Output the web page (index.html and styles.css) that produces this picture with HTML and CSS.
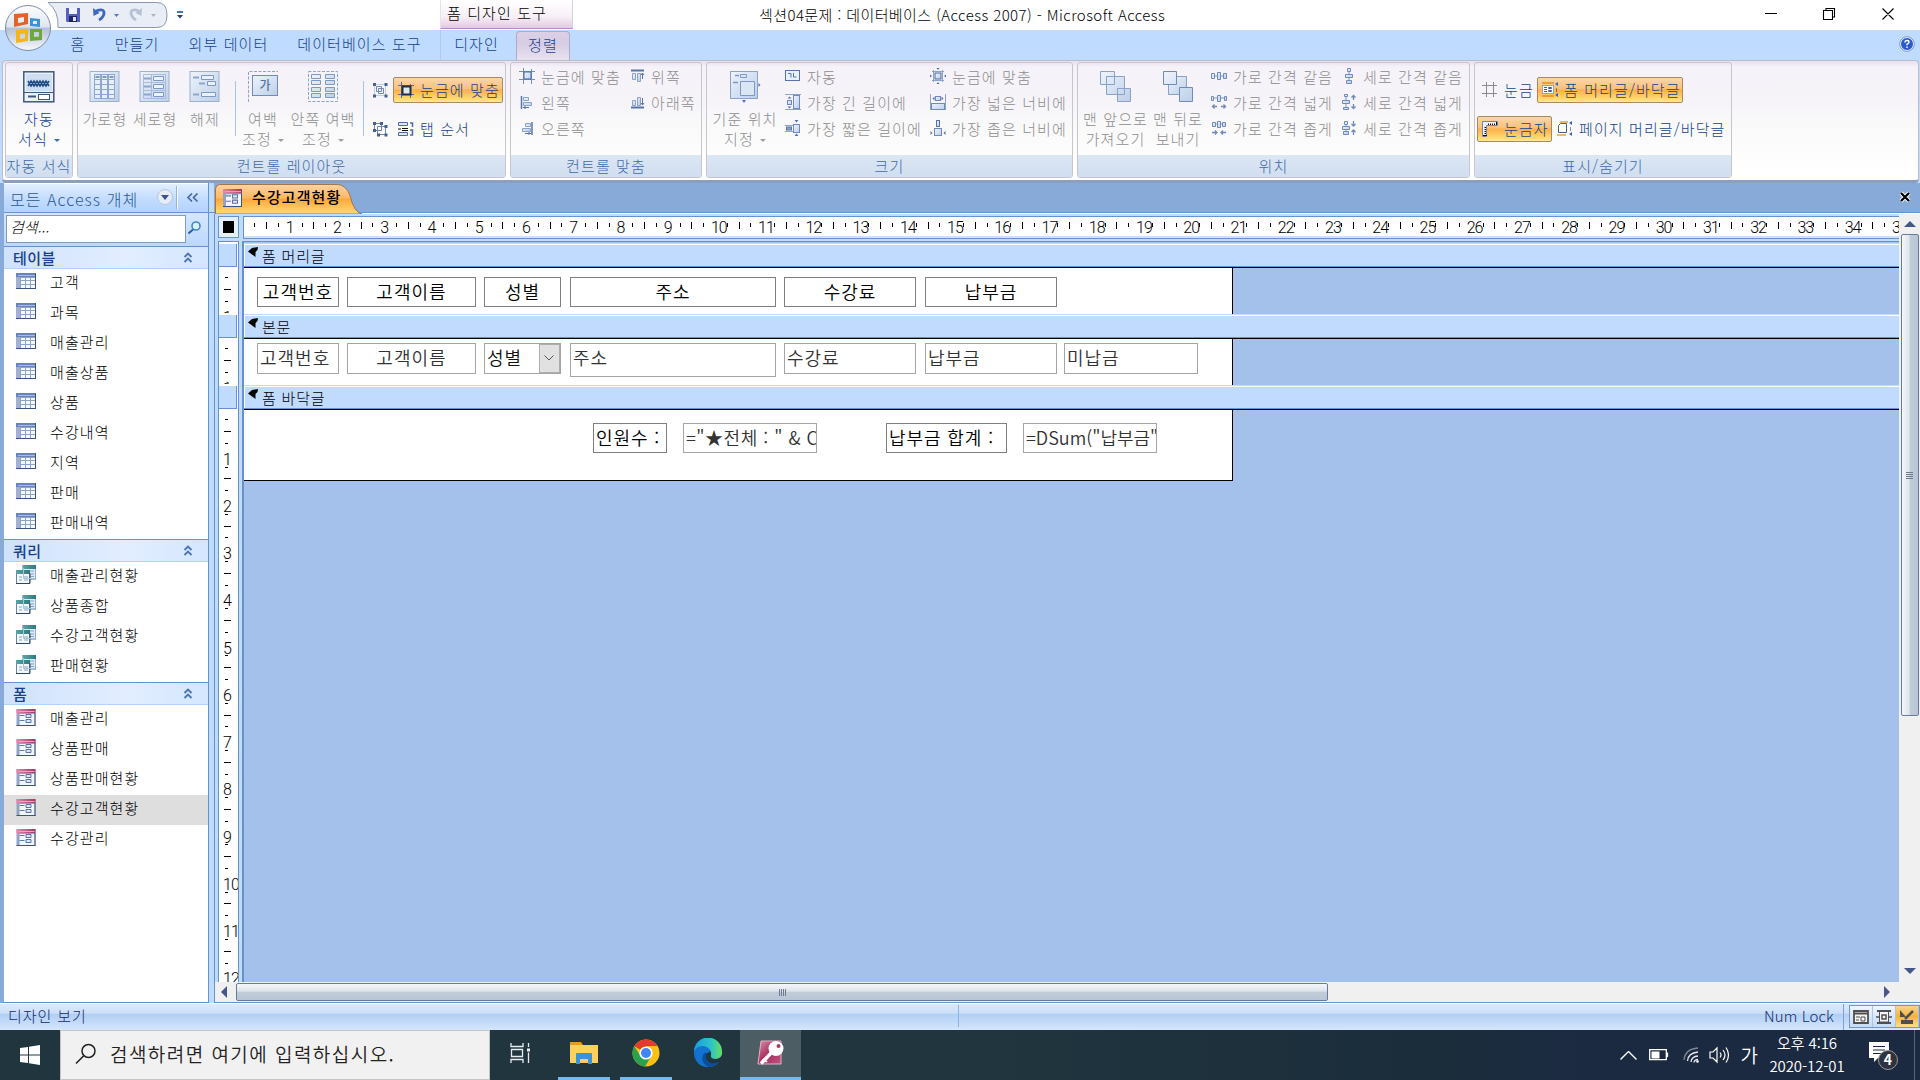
FILE: index.html
```html
<!DOCTYPE html>
<html lang="ko">
<head>
    <meta charset="UTF-8">
    <title>섹션04문제 : 데이터베이스 (Access 2007) - Microsoft Access</title>
    <link rel="stylesheet" href="styles.css">
</head>
<body>

<svg class="defs" width="0" height="0">
    <defs>
        <linearGradient id="gBlue" x1="0" y1="0" x2="1" y2="1"><stop offset="0" stop-color="#eef4fc"/><stop offset="1" stop-color="#bccfe8"/></linearGradient>
        <linearGradient id="gOrb" x1="0" y1="0" x2="0" y2="1"><stop offset="0" stop-color="#fdfdfe"/><stop offset=".48" stop-color="#dfe5ef"/><stop offset=".5" stop-color="#b3c0d6"/><stop offset="1" stop-color="#f6f9fd"/></linearGradient>
        <linearGradient id="gPink" x1="0" y1="0" x2="1" y2="0"><stop offset="0" stop-color="#dc8aab"/><stop offset="1" stop-color="#a8325f"/></linearGradient>
        <linearGradient id="gTeal" x1="0" y1="0" x2="1" y2="0"><stop offset="0" stop-color="#5ba3a5"/><stop offset="1" stop-color="#2f7a80"/></linearGradient>
        <linearGradient id="gTab" x1="0" y1="0" x2="0" y2="1"><stop offset="0" stop-color="#fdd2a2"/><stop offset=".45" stop-color="#fdb964"/><stop offset=".5" stop-color="#fca73c"/><stop offset="1" stop-color="#ffde72"/></linearGradient>
        <linearGradient id="gEdge" x1="0" y1="0" x2="1" y2="0"><stop offset="0" stop-color="#1b9de2"/><stop offset=".6" stop-color="#2cc3c9"/><stop offset="1" stop-color="#66df5a"/></linearGradient>
        <linearGradient id="gAcc" x1="0" y1="0" x2="1" y2="1"><stop offset="0" stop-color="#d892ac"/><stop offset=".5" stop-color="#a82d5f"/><stop offset="1" stop-color="#c0537f"/></linearGradient>
    </defs>
    <symbol id="i-table" viewBox="0 0 20 16">
        <rect width="20" height="16" fill="#8fa3c8"/><path d="M0 0h20v4H0z" fill="#6a84bb"/><path d="M0 4h4v12H0z" fill="#a3b1cd"/>
        <path d="M5 5h4v2H5zM10 5h4v2h-4zM15 5h4v2h-4zM5 8h4v3H5zM10 8h4v3h-4zM15 8h4v3h-4zM5 12h4v3H5zM10 12h4v3h-4zM15 12h4v3h-4z" fill="#f4f8ff"/>
        <path d="M2 2.500h17" stroke="#a7bbe2"/><path d="M0 15.500h20M19.500 0v16" stroke="#3c5480"/>
    </symbol>
    <symbol id="i-query" viewBox="0 0 20 19">
        <rect x="7" width="13" height="14" fill="#dce9f8" stroke="#4f739c"/><path d="M7 0h13v4H7z" fill="url(#gTeal)"/><path d="M14 6h4M14 9h4M14 11.500h4" stroke="#86a4c8"/>
        <rect x=".5" y="5.500" width="13" height="13" fill="#f3f8fe" stroke="#6a84a5"/><path d="M0 5h14v4H0z" fill="url(#gTeal)"/>
        <path d="M3 12h3M3 15h3M8 12h4M8 15h4" stroke="#86a4c8"/><path d="M0 18.500h14v-10" fill="none" stroke="#2f4767"/><path d="M7.500 3v10.500h12" fill="none" stroke="#a9c6d4"/>
    </symbol>
    <symbol id="i-form" viewBox="0 0 19 17">
        <rect width="19" height="17" fill="#93a3c2"/><rect x="3" y="5" width="15" height="11" fill="#f1f6ff"/><path d="M0 0h19v4H0z" fill="url(#gPink)"/><path d="M2 2.500h16" stroke="#e6a9c1"/>
        <path d="M3 6.500h5M3 11.500h5" stroke="#62799f" /><path d="M9.500 5.500h5v3h-5zM9.500 10.500h5v3h-5z" fill="#dce6f7" stroke="#5d7399"/><path d="M0 16.500h19M18.500 4v13" stroke="#3c5480"/>
    </symbol>
    <symbol id="i-chev2" viewBox="0 0 10 11"><path d="M1.500 5L5 1.500 8.500 5M1.500 10L5 6.500 8.500 10" fill="none" stroke="#4a74b4" stroke-width="1.800"/></symbol>
    <symbol id="i-snap" viewBox="0 0 16 16"><path d="M4.500 0v16M12.500 1v15M0 3.500h16M0 11.500h16" stroke="#6f8fc4"/><rect x="5" y="4" width="7" height="7" fill="url(#gBlue)" stroke="#4b68a0"/></symbol>
    <symbol id="i-snapdark" viewBox="0 0 16 16"><path d="M3.500 0v16M12.500 2v14M0 3.500h16M0 12.500h16" stroke="#4a6db0"/><rect x="4.500" y="4.500" width="8" height="8" fill="#dfe8f7" stroke="#222c44" stroke-width="2"/></symbol>
    <symbol id="i-left" viewBox="0 0 16 16"><path d="M2.500 2v13" stroke="#5873a8" stroke-width="1.500"/><path d="M4.500 3.500h5v3h-5zM4.500 8.500h8v3h-8z" fill="url(#gBlue)" stroke="#8ba3cb"/><path d="M4 13.500h6M6 12v3" stroke="#5873a8"/></symbol>
    <symbol id="i-right" viewBox="0 0 16 16"><path d="M13 2v13" stroke="#5873a8" stroke-width="1.500"/><path d="M6.500 3.500h5v3h-5zM3.500 8.500h8v3h-8z" fill="url(#gBlue)" stroke="#8ba3cb"/><path d="M6 13.500h6M10 12v3" stroke="#5873a8"/></symbol>
    <symbol id="i-top" viewBox="0 0 16 16"><path d="M2 2.500h13" stroke="#5873a8" stroke-width="2"/><path d="M3.500 5.500h3v6h-3zM8.500 5.500h3v8h-3z" fill="url(#gBlue)" stroke="#8ba3cb"/><path d="M13.500 5v6M12 7l1.500-2L15 7" stroke="#5873a8" fill="none"/></symbol>
    <symbol id="i-bottom" viewBox="0 0 16 16"><path d="M2 13.500h13" stroke="#5873a8" stroke-width="2"/><path d="M3.500 6.500h3v5h-3zM8.500 3.500h3v8h-3z" fill="url(#gBlue)" stroke="#8ba3cb"/><path d="M13.500 4v7M12 9l1.500 2L15 9" stroke="#5873a8" fill="none"/></symbol>
    <symbol id="i-auto" viewBox="0 0 16 16"><rect x=".5" y="2.500" width="14" height="10" fill="#e9f0fb" stroke="#5873a8"/><path d="M3 5.500h3v4M8.500 5v4h3" stroke="#5873a8" fill="none"/></symbol>
    <symbol id="i-tall" viewBox="0 0 16 16"><path d="M0 .5h16M0 15.500h16" stroke="#8ba3cb"/><rect x="8.500" y="1.500" width="6" height="13" fill="url(#gBlue)" stroke="#6f8abb"/><rect x="2.500" y="6.500" width="4" height="4" fill="url(#gBlue)" stroke="#6f8abb"/><path d="M2.500 4.500l2-2 2 2zM2.500 12.500l2 2 2-2z" fill="#5873a8"/></symbol>
    <symbol id="i-short" viewBox="0 0 16 16"><path d="M0 5.500h8M0 11.500h8" stroke="#8ba3cb"/><rect x="1.500" y="7" width="5" height="3" fill="#8ba3cb" stroke="#5873a8"/><rect x="8.500" y="4.500" width="6" height="8" fill="url(#gBlue)" stroke="#6f8abb"/><path d="M9.500 0h4l-2 2.500zM9.500 16h4l-2-2.500z" fill="#5873a8"/></symbol>
    <symbol id="i-fit" viewBox="0 0 16 16"><path d="M3.500 2v12M12.500 2v12M2 3.500h12M2 12.500h12" stroke="#8ba3cb"/><rect x="5" y="5" width="6" height="6" fill="url(#gBlue)" stroke="#4b68a0"/><path d="M6.500 0h3L8 2zM6.500 16h3L8 14zM0 6.500v3L2 8zM16 6.500v3L14 8z" fill="#5873a8"/></symbol>
    <symbol id="i-wide" viewBox="0 0 16 16"><path d="M.5 0v16M15.500 0v16" stroke="#8ba3cb"/><rect x="1.500" y="9.500" width="13" height="6" fill="url(#gBlue)" stroke="#6f8abb"/><rect x="5.500" y="2.500" width="5" height="4" fill="url(#gBlue)" stroke="#6f8abb"/><path d="M4.500 2.500v4l-2-2zM11.500 2.500v4l2-2z" fill="#5873a8"/></symbol>
    <symbol id="i-narrow" viewBox="0 0 16 16"><rect x="6.500" y=".5" width="3" height="6" fill="url(#gBlue)" stroke="#5873a8"/><rect x="4.500" y="8.500" width="7" height="7" fill="url(#gBlue)" stroke="#6f8abb"/><path d="M.5 11v4l2-2zM15.500 11v4l-2-2z" fill="#5873a8"/></symbol>
    <symbol id="i-heq" viewBox="0 0 16 16"><path d="M0 8h16" stroke="#7f99c6"/><path d="M.5 5.500h3v5h-3zM6.500 4.500h3v7h-3zM12.500 5.500h3v5h-3z" fill="url(#gBlue)" stroke="#6f8abb"/></symbol>
    <symbol id="i-hinc" viewBox="0 0 16 16"><path d="M0 4h16" stroke="#7f99c6"/><path d="M.5 2.500h2v4h-2zM6.500 1.500h3v6h-3zM13.500 2.500h2v4h-2z" fill="url(#gBlue)" stroke="#6f8abb"/><path d="M1 12.500h5M10 12.500h5M3.500 10.500l-2 2 2 2M12.500 10.500l2 2-2 2" fill="none" stroke="#6f8abb" stroke-width="1.300"/></symbol>
    <symbol id="i-hdec" viewBox="0 0 16 16"><path d="M2 4h12" stroke="#7f99c6"/><path d="M1.500 2.500h3v4h-3zM6.500 1.500h3v6h-3zM11.500 2.500h3v4h-3z" fill="url(#gBlue)" stroke="#6f8abb"/><path d="M1 12.500h5M10 12.500h5M4 10.500l2 2-2 2M12 10.500l-2 2 2 2" fill="none" stroke="#6f8abb" stroke-width="1.300"/></symbol>
    <symbol id="i-veq" viewBox="0 0 16 16"><path d="M8 0v16" stroke="#7f99c6"/><path d="M6.500 .5h3v3h-3zM4.500 6.500h7v3h-7zM5.500 12.500h5v3h-5z" fill="url(#gBlue)" stroke="#6f8abb"/></symbol>
    <symbol id="i-vinc" viewBox="0 0 16 16"><path d="M5 0v16" stroke="#7f99c6"/><path d="M3.500 .5h3v2h-3zM1.500 6.500h7v3h-7zM2.500 13.500h5v2h-5z" fill="url(#gBlue)" stroke="#6f8abb"/><path d="M12.500 1v5M12.500 10v5M10.500 3.500l2-2 2 2M10.500 12.500l2 2 2-2" fill="none" stroke="#6f8abb" stroke-width="1.300"/></symbol>
    <symbol id="i-vdec" viewBox="0 0 16 16"><path d="M5 2v12" stroke="#7f99c6"/><path d="M3.500 1.500h3v3h-3zM1.500 6.500h7v3h-7zM2.500 11.500h5v3h-5z" fill="url(#gBlue)" stroke="#6f8abb"/><path d="M12.500 1v5M12.500 10v5M10.500 4l2 2 2-2M10.500 12l2-2 2 2" fill="none" stroke="#6f8abb" stroke-width="1.300"/></symbol>
    <symbol id="i-group" viewBox="0 0 16 16"><path d="M2.500 2.500h11v11h-11z" fill="none" stroke="#c3cde0"/><path d="M4.500 4.500h5v5h-5zM6.500 6.500h5v5h-5z" fill="none" stroke="#6f87b3"/><path d="M1 1h3v3H1zM12.500 1h3v3h-3zM1 12.500h3v3H1zM12.500 12.500h3v3h-3z" fill="#47618f"/></symbol>
    <symbol id="i-ungroup" viewBox="0 0 16 16"><path d="M2.500 2.500h7v7h-7zM5.500 5.500h8v8h-8z" fill="none" stroke="#6f87b3"/><path d="M1 1h3v3H1zM8 1h3v3H8zM1 8h3v3H1zM12.500 4h3v3h-3zM12.500 12.500h3v3h-3zM5 12.500h3v3H5z" fill="#47618f"/></symbol>
    <symbol id="i-taborder" viewBox="0 0 16 16"><path d="M.5 1.500h9v3h-9zM.5 11.500h9v3h-9z" fill="#dce6f5" stroke="#50699c"/><path d="M0 8h3M4 7.500h6M4 9.500h6" stroke="#111"/><path d="M12 2h2.500v4M12 9h2.500v5H12" fill="none" stroke="#50699c" stroke-width="1.500"/></symbol>
    <symbol id="i-grid" viewBox="0 0 16 16"><path d="M4.500 0v15M11.500 0v15M0 3.500h15M0 11.500h15" stroke="#8b8b8b"/></symbol>
    <symbol id="i-ruler" viewBox="0 0 16 16"><path d="M.5 .5h15v4h-11v11h-4z" fill="#eef4ff" stroke="#6c86b6"/><path d="M6.500 4V2.500M8.500 4V2.500M10.500 4V2.500M12.500 4V2.500M14.500 4V1M4 6.500H2.500M4 8.500H2.500M4 10.500H2.500M4 12.500H2.500M5 14.500H1" stroke="#111"/></symbol>
    <symbol id="i-formhf" viewBox="0 0 16 16"><path d="M0 1h12M0 14h12" stroke="#f08a24" stroke-width="1.500"/><rect x=".5" y="3.500" width="11" height="8" fill="#fff" stroke="#8fa5cc"/><path d="M2 5.500h3M2 7.500h3M2 9.500h3M6.500 5.500h3v1h-3zM6.500 8.500h3v1h-3z" fill="none" stroke="#445f95"/><path d="M16 0v4L13 2zM16 11v4L13 13z" fill="#3565b5"/><path d="M14 7h1M14 9h1" stroke="#222"/></symbol>
    <symbol id="i-pagehf" viewBox="0 0 16 16"><path d="M3 1h8M0 14h9" stroke="#f0a13c" stroke-width="1.500"/><path d="M3.500 2.500h6v9h-8v-7z" fill="#fff" stroke="#445f95"/><path d="M15 0v4L12 2zM15 11v4L12 13z" fill="#3565b5"/><path d="M13 7h1M13 9h1" stroke="#222"/></symbol>
    <symbol id="i-flag" viewBox="0 0 10 10"><path d="M10 0L9.500 3 7.500 5v5L0 4.500 4 1z" fill="#000"/></symbol>
</svg>

<div class="window">

    <!-- Title bar -->
    <header class="titlebar">
        <div class="qat">
            <svg width="150" height="30" viewBox="0 0 150 30">
                <path d="M0 2.500h109q10 0 10 12.500t-10 12.500H10Q11 11 0 2.500z" fill="#e9eef6" stroke="#8d99ab"/>
                <path d="M18 8h14v14H19l-1-1z" fill="#5560c4"/><path d="M21 8h8v6h-8z" fill="#eef1fb"/><path d="M21 16h8v6h-8z" fill="#20275e"/><path d="M25 17h3v4h-3z" fill="#dfe4f5"/>
                <path d="M48 11q8-3 8 2 0 4-5 7" fill="none" stroke="#3d68bd" stroke-width="2.800"/><path d="M45 8l.5 8 6-3z" fill="#3d68bd"/>
                <path d="M66 14h5l-2.500 3z" fill="#4f7bc0"/><path d="M103 14h5l-2.500 3z" fill="#b0b3b8"/>
                <path d="M91 11q-8-3-8 2 0 4 5 7" fill="none" stroke="#b5c2d6" stroke-width="2.800"/><path d="M94 8l-.5 8-6-3z" fill="#b5c2d6"/>
                <path d="M129 12h6" stroke="#15428b" stroke-width="1.500"/><path d="M129 15h6l-3 3.500z" fill="#15428b"/>
            </svg>
        </div>
        <div class="context-title">폼 디자인 도구</div>
        <div class="window-title">섹션04문제 : 데이터베이스 (Access 2007) - Microsoft Access</div>
        <svg class="window-buttons" width="140" height="30" viewBox="0 0 140 30">
            <path d="M5 13.500h12M63.500 10.500h9v9h-9zM66 10V8.500h8.500V17H73M122.500 8.500l11 11M133.500 8.500l-11 11" fill="none" stroke="#000" stroke-width="1.100"/>
        </svg>
    </header>
    <svg class="orb" width="48" height="56" viewBox="0 0 48 56">
        <ellipse cx="24" cy="28" rx="22.500" ry="22.500" fill="url(#gOrb)" stroke="#7d8ca6"/>
        <path d="M10 14l14-1v11l-14 3zm4 4v5l6-1v-5z" fill="#e2642b" fill-rule="evenodd"/>
        <path d="M26 18l10 1v8l-10-1zm3 3v3h4v-3z" fill="#3b93d6" fill-rule="evenodd"/>
        <path d="M12 30l12-1v12l-12 2zm4 4v5l5-1v-5z" fill="#f2b51c" fill-rule="evenodd"/>
        <path d="M26 29h12v11l-12 1zm4 3v5l5-.5V32z" fill="#6da83a" fill-rule="evenodd"/>
    </svg>

    <!-- Ribbon tabs -->
    <nav class="tabs">
        <span class="tab t-home">홈</span><span class="tab t-create">만들기</span><span class="tab t-ext">외부 데이터</span><span class="tab t-db">데이터베이스 도구</span><span class="tab t-design">디자인</span><span class="tab active">정렬</span>
        <svg class="help" width="16" height="16" viewBox="0 0 16 16"><circle cx="8" cy="8" r="6.500" fill="#2a5bd0" stroke="#fff"/><circle cx="8" cy="8" r="7.300" fill="none" stroke="#5b7fc0" stroke-width=".7"/><path d="M6 6.500q0-2 2-2t2 1.700q0 1-2 2v1M8 10.500v1.500" fill="none" stroke="#fff" stroke-width="1.400"/></svg>
    </nav>

    <!-- Ribbon -->
    <div class="ribbon">
        <section class="group g1">
            <div class="group-body">
                <div class="big on">
                    <svg width="32" height="32" viewBox="0 0 32 32"><rect x=".8" y=".8" width="30" height="30" fill="#eaf1fa" stroke="#3f5780" stroke-width="1.500"/><rect x="3" y="3" width="26" height="17" fill="#cfdff2"/><path d="M5 10l3 5 3-5 3 5 3-5 3 5 3-5 3 5M5 15l3-5 3 5 3-5 3 5 3-5 3 5 3-5" fill="none" stroke="#1f4a86" stroke-width="1.500"/><path d="M1 21.500h30" stroke="#3f5780"/><path d="M5 25.500h8" stroke="#3f5780" stroke-width="2"/><rect x="15.500" y="23.500" width="11" height="5" fill="#fff" stroke="#3f5780"/></svg>
                    <span>자동<br>서식<i class="dd"></i></span>
                </div>
            </div>
            <div class="group-title">자동 서식</div>
        </section>
        <section class="group g2">
            <div class="group-body">
                <div class="big w50">
                    <svg width="32" height="32" viewBox="0 0 32 32"><rect x="1" y=".5" width="29" height="30" fill="url(#gBlue)" stroke="#9bb0d2"/><path d="M5.500 3.500h20v24h-20zM11.500 3v25M12.500 3v25M18.500 3v25M19.500 3v25M5 8.500h21M5 13.500h21M5 18.500h21M5 23.500h21" fill="#e6eefa" stroke="#8fa6cd"/><path d="M6.500 6h4M13.500 6h4M20.500 6h4" stroke="#7f98c2" stroke-width="2"/></svg>
                    <span>가로형</span>
                </div>
                <div class="big w50">
                    <svg width="32" height="32" viewBox="0 0 32 32"><rect x="1" y=".5" width="29" height="30" fill="url(#gBlue)" stroke="#9bb0d2"/><path d="M4.500 3.500h22v24h-22zM4 11.500h23M4 19.500h23M12.500 3v25" fill="none" stroke="#a9bcda"/><path d="M14.500 5.500h10v4h-10zM14.500 13.500h10v4h-10zM14.500 21.500h10v4h-10z" fill="#e9f1fc" stroke="#7f98c2"/><path d="M5 7.500h7M5 15.500h7M5 23.500h7" stroke="#8fa6cd" stroke-width="2"/></svg>
                    <span>세로형</span>
                </div>
                <div class="big w50">
                    <svg width="32" height="32" viewBox="0 0 32 32"><rect x="1" y=".5" width="29" height="30" fill="url(#gBlue)" stroke="#9bb0d2"/><path d="M12.500 4.500h12v4h-12zM18.500 10.500h8v4h-8zM12.500 21.500h14v4h-14z" fill="#e9f1fc" stroke="#7f98c2"/><path d="M4 6.500h6M10 12.500h6M4 23.500h6" stroke="#8fa6cd" stroke-width="2"/></svg>
                    <span>해제</span>
                </div>
                <div class="sep"></div>
                <div class="big w54">
                    <svg width="32" height="32" viewBox="0 0 32 32"><path d="M1.500 31V.5H31" fill="none" stroke="#8fa3c6" stroke-dasharray="3 1.500"/><rect x="5.500" y="4.500" width="25" height="20" fill="url(#gBlue)" stroke="#6f8abb"/><text x="18" y="19" class="ga">가</text></svg>
                    <span>여백<br>조정<i class="dd"></i></span>
                </div>
                <div class="big w66">
                    <svg width="32" height="32" viewBox="0 0 32 32"><rect x="1.500" y=".5" width="29" height="30" fill="none" stroke="#8fa3c6" stroke-dasharray="3 1.500"/><path d="M4.500 3.500h9v4h-9zM18.500 3.500h9v4h-9zM4.500 9.500h9v4h-9zM18.500 9.500h9v4h-9zM4.500 16.500h9v4h-9zM18.500 16.500h9v4h-9zM4.500 22.500h9v4h-9zM18.500 22.500h9v4h-9z" fill="url(#gBlue)" stroke="#7f98c2"/></svg>
                    <span>안쪽 여백<br>조정<i class="dd"></i></span>
                </div>
                <div class="sep s2"></div>
                <div class="pair-rows">
                    <div class="pair"><svg class="ic"><use href="#i-group"/></svg><div class="btn lit w110"><svg class="ic"><use href="#i-snapdark"/></svg>눈금에 맞춤</div></div>
                    <div class="pair"><svg class="ic"><use href="#i-ungroup"/></svg><div class="btn w110"><svg class="ic"><use href="#i-taborder"/></svg>탭 순서</div></div>
                </div>
            </div>
            <div class="group-title">컨트롤 레이아웃</div>
        </section>
        <section class="group g3">
            <div class="group-body">
                <div class="rows w118">
                    <div class="small"><svg class="ic"><use href="#i-snap"/></svg>눈금에 맞춤</div>
                    <div class="small"><svg class="ic"><use href="#i-left"/></svg>왼쪽</div>
                    <div class="small"><svg class="ic"><use href="#i-right"/></svg>오른쪽</div>
                </div>
                <div class="rows">
                    <div class="small"><svg class="ic"><use href="#i-top"/></svg>위쪽</div>
                    <div class="small"><svg class="ic"><use href="#i-bottom"/></svg>아래쪽</div>
                </div>
            </div>
            <div class="group-title">컨트롤 맞춤</div>
        </section>
        <section class="group g4">
            <div class="group-body">
                <div class="big w76">
                    <svg width="32" height="32" viewBox="0 0 32 32"><rect x="1.500" y=".5" width="27" height="27" fill="url(#gBlue)" stroke="#8ba3cb"/><path d="M11.500 3.500h6v3h-6zM11.500 10.500h14v14h-14z" fill="#dbe6f5" stroke="#7f98c2"/><path d="M6 4.500h4M4 11.500h5" stroke="#7f98c2" stroke-width="1.500"/><path d="M29.500 12v4l2-2zM13 29h4l-2 3z" fill="#5873a8"/></svg>
                    <span>기준 위치<br>지정<i class="dd"></i></span>
                </div>
                <div class="rows w145">
                    <div class="small"><svg class="ic"><use href="#i-auto"/></svg>자동</div>
                    <div class="small"><svg class="ic"><use href="#i-tall"/></svg>가장 긴 길이에</div>
                    <div class="small"><svg class="ic"><use href="#i-short"/></svg>가장 짧은 길이에</div>
                </div>
                <div class="rows">
                    <div class="small"><svg class="ic"><use href="#i-fit"/></svg>눈금에 맞춤</div>
                    <div class="small"><svg class="ic"><use href="#i-wide"/></svg>가장 넓은 너비에</div>
                    <div class="small"><svg class="ic"><use href="#i-narrow"/></svg>가장 좁은 너비에</div>
                </div>
            </div>
            <div class="group-title">크기</div>
        </section>
        <section class="group g5">
            <div class="group-body">
                <div class="big w75">
                    <svg width="32" height="32" viewBox="0 0 32 32"><g fill="url(#gBlue)" stroke="#8aa2ca"><path d="M.5 .5h14v13H.5zM17.500 17.500h13v13h-13zM6.500 5.500h18v18h-18z"/></g></svg>
                    <span>맨 앞으로<br>가져오기</span>
                </div>
                <div class="big w50">
                    <svg width="32" height="32" viewBox="0 0 32 32"><g fill="url(#gBlue)" stroke="#8aa2ca"><path d="M6.500 5.500h18v18h-18z"/><path d="M1.500 .5h13v13h-13zM17.500 16.500h13v14h-13z" stroke="#6f8abb"/></g></svg>
                    <span>맨 뒤로<br>보내기</span>
                </div>
                <div class="rows w138">
                    <div class="small"><svg class="ic"><use href="#i-heq"/></svg>가로 간격 같음</div>
                    <div class="small"><svg class="ic"><use href="#i-hinc"/></svg>가로 간격 넓게</div>
                    <div class="small"><svg class="ic"><use href="#i-hdec"/></svg>가로 간격 좁게</div>
                </div>
                <div class="rows">
                    <div class="small"><svg class="ic"><use href="#i-veq"/></svg>세로 간격 같음</div>
                    <div class="small"><svg class="ic"><use href="#i-vinc"/></svg>세로 간격 넓게</div>
                    <div class="small"><svg class="ic"><use href="#i-vdec"/></svg>세로 간격 좁게</div>
                </div>
            </div>
            <div class="group-title">위치</div>
        </section>
        <section class="group g6">
            <div class="group-body">
                <div class="pair-rows">
                    <div class="pair"><div class="btn w60"><svg class="ic"><use href="#i-grid"/></svg>눈금</div><div class="btn lit w146"><svg class="ic"><use href="#i-formhf"/></svg>폼 머리글/바닥글</div></div>
                    <div class="pair"><div class="btn lit w75"><svg class="ic"><use href="#i-ruler"/></svg>눈금자</div><div class="btn"><svg class="ic"><use href="#i-pagehf"/></svg>페이지 머리글/바닥글</div></div>
                </div>
            </div>
            <div class="group-title">표시/숨기기</div>
        </section>
    </div>

    <main class="main">
        <!-- Navigation pane -->
        <aside class="nav">
            <div class="nav-head"><span>모든 Access 개체</span>
                <svg width="46" height="26" viewBox="0 0 46 26"><circle cx="9" cy="13" r="7.500" fill="#e4edf9" stroke="#b7c6de"/><path d="M5 11h8l-4 5z" fill="#3a4f94"/><path d="M20.500 2v23" stroke="#8fb3e5"/><path d="M21.500 2v23" stroke="#fff"/><path d="M36 9.500l-4 4 4 4M41.500 9.500l-4 4 4 4" fill="none" stroke="#41659f" stroke-width="1.600"/></svg>
            </div>
            <div class="nav-search"><div class="search-box">검색...</div>
                <svg width="14" height="14" viewBox="0 0 14 14"><circle cx="8" cy="5" r="4" fill="#dff1ff" stroke="#3e8ac6" stroke-width="1.600"/><path d="M5 8.500l-4.500 4" stroke="#2d5fa5" stroke-width="2"/></svg>
            </div>
            <div class="nav-section">테이블<svg width="10" height="11"><use href="#i-chev2"/></svg></div>
            <ul>
                <li><svg width="20" height="16"><use href="#i-table"/></svg>고객</li>
                <li><svg width="20" height="16"><use href="#i-table"/></svg>과목</li>
                <li><svg width="20" height="16"><use href="#i-table"/></svg>매출관리</li>
                <li><svg width="20" height="16"><use href="#i-table"/></svg>매출상품</li>
                <li><svg width="20" height="16"><use href="#i-table"/></svg>상품</li>
                <li><svg width="20" height="16"><use href="#i-table"/></svg>수강내역</li>
                <li><svg width="20" height="16"><use href="#i-table"/></svg>지역</li>
                <li><svg width="20" height="16"><use href="#i-table"/></svg>판매</li>
                <li><svg width="20" height="16"><use href="#i-table"/></svg>판매내역</li>
            </ul>
            <div class="nav-section">쿼리<svg width="10" height="11"><use href="#i-chev2"/></svg></div>
            <ul>
                <li><svg width="20" height="19"><use href="#i-query"/></svg>매출관리현황</li>
                <li><svg width="20" height="19"><use href="#i-query"/></svg>상품종합</li>
                <li><svg width="20" height="19"><use href="#i-query"/></svg>수강고객현황</li>
                <li><svg width="20" height="19"><use href="#i-query"/></svg>판매현황</li>
            </ul>
            <div class="nav-section">폼<svg width="10" height="11"><use href="#i-chev2"/></svg></div>
            <ul>
                <li><svg width="19" height="17"><use href="#i-form"/></svg>매출관리</li>
                <li><svg width="19" height="17"><use href="#i-form"/></svg>상품판매</li>
                <li><svg width="19" height="17"><use href="#i-form"/></svg>상품판매현황</li>
                <li class="selected"><svg width="19" height="17"><use href="#i-form"/></svg>수강고객현황</li>
                <li><svg width="19" height="17"><use href="#i-form"/></svg>수강관리</li>
            </ul>
        </aside>

        <!-- Form designer -->
        <div class="doc">
            <div class="doc-tabs">
                <div class="doc-tab">
                    <svg class="doc-tab-bg" width="150" height="30" viewBox="0 0 150 30"><path d="M.5 30V5q0-4 4-4.500H122q9 0 13 11 4 17 12 18.500z" fill="url(#gTab)" stroke="#a0764a"/></svg>
                    <svg class="doc-icon" width="19" height="18" viewBox="0 0 19 17" preserveAspectRatio="none"><use href="#i-form"/></svg>
                    <b>수강고객현황</b>
                </div>
                <svg class="doc-close" width="12" height="12" viewBox="0 0 12 12"><path d="M2 2l8 8M10 2l-8 8" stroke="#fff" stroke-width="4"/><path d="M2 2l8 8M10 2l-8 8" stroke="#000" stroke-width="2.300"/></svg>
            </div>
            <div class="doc-body">
                <div class="design">
                    <div class="ruler-row">
                        <div class="selector"><i></i></div>
                        <div class="hruler" id="hruler"></div>
                    </div>
                    <div class="canvas">
                        <div class="vruler">
                            <div class="vband"></div><div class="vpart" data-len="46"></div>
                            <div class="vband"></div><div class="vpart" data-len="46"></div>
                            <div class="vband"></div><div class="vpart grow" data-len="573"></div>
                        </div>
                        <div class="sections">
                            <div class="band"><svg width="10" height="10"><use href="#i-flag"/></svg>폼 머리글</div>
                            <div class="sheet head">
                                <div class="field c w82">고객번호</div><div class="field c w129">고객이름</div><div class="field c w77">성별</div><div class="field c w206">주소</div><div class="field c w132">수강료</div><div class="field c w132b">납부금</div>
                            </div>
                            <div class="band"><svg width="10" height="10"><use href="#i-flag"/></svg>본문</div>
                            <div class="sheet detail">
                                <div class="field w82">고객번호</div><div class="field c w129">고객이름</div><div class="field combo w77">성별<em><svg width="10" height="6" viewBox="0 0 10 6"><path d="M.5 .5L5 5 9.500 .5" fill="none" stroke="#555"/></svg></em></div><div class="field tall w206">주소</div><div class="field w132">수강료</div><div class="field w132b">납부금</div><div class="field w134">미납금</div>
                            </div>
                            <div class="band"><svg width="10" height="10"><use href="#i-flag"/></svg>폼 바닥글</div>
                            <div class="sheet foot">
                                <div class="field lbl f1">인원수 :</div><div class="field f2">="★전체 : " &amp; Count(*)</div><div class="field lbl f3">납부금 합계 :</div><div class="field f4">=DSum("납부금","수강")</div>
                            </div>
                        </div>
                    </div>
                    <div class="hscroll">
                        <svg width="12" height="14" viewBox="0 0 12 14"><path d="M9 1v12L3 7z" fill="#44578a"/></svg>
                        <div class="hthumb"><i></i><i></i><i></i><i></i></div>
                        <svg width="12" height="14" viewBox="0 0 12 14"><path d="M2 1v12l6-6z" fill="#44578a"/></svg>
                    </div>
                </div>
                <div class="vscroll">
                    <svg width="12" height="8" viewBox="0 0 12 8"><path d="M0 7h12L6 1z" fill="#44578a"/></svg>
                    <div class="vthumb"><i></i><i></i><i></i><i></i></div>
                    <svg class="down" width="12" height="8" viewBox="0 0 12 8"><path d="M0 1h12L6 7z" fill="#44578a"/></svg>
                </div>
            </div>
        </div>
    </main>

    <footer class="status">
        <span class="mode">디자인 보기</span>
        <i class="status-div"></i>
        <span class="numlock">Num Lock</span>
        <div class="views">
            <span><svg width="16" height="14" viewBox="0 0 16 14"><path d="M1 1h14v12H1z" fill="#f4f4f4" stroke="#4f4f4f" stroke-width="1.800"/><path d="M1 3.500h14" stroke="#4f4f4f" stroke-width="2"/><path d="M3 7h4M3 10h3M8 7h4v4H8z" stroke="#4f4f4f" fill="none"/></svg></span>
            <span><svg width="16" height="14" viewBox="0 0 16 14"><path d="M1 1h14M1 13h14" stroke="#4f4f4f" stroke-width="1.800"/><path d="M3.500 2v10h9V2" fill="#f4f4f4" stroke="#4f4f4f"/><path d="M0 7h4M12 7h4M6 5h4v4H6z" stroke="#4f4f4f" stroke-width="1.500" fill="none"/></svg></span>
            <span class="cur"><svg width="16" height="14" viewBox="0 0 16 14"><path d="M1 0v7h6z" fill="#4f4f4f"/><path d="M14 1L6 9" stroke="#4f4f4f" stroke-width="2.500"/><path d="M2 10h12v4H2z" fill="#4f4f4f"/></svg></span>
        </div>
    </footer>

    <!-- Windows taskbar -->
    <div class="taskbar">
        <div class="start"><svg width="20" height="20" viewBox="0 0 20 20"><path d="M0 3l8-1v7.500H0zM9 1.800L20 0v9.500H9zM0 10.500h8V18l-8-1zM9 10.500h11V20L9 18.300z" fill="#fff"/></svg></div>
        <div class="task-search"><svg width="22" height="22" viewBox="0 0 22 22"><circle cx="13.500" cy="8" r="6.500" fill="none" stroke="#222" stroke-width="1.500"/><path d="M9 12.500L1 20.500" stroke="#222" stroke-width="1.600"/></svg>검색하려면 여기에 입력하십시오.</div>
        <div class="app taskview"><svg width="22" height="20" viewBox="0 0 22 20"><path d="M1 0v3.500h12V0M1.500 6.500h11v7h-11zM1 20v-3.500h12V20M18.500 0v4M18.500 9.500V20" fill="none" stroke="#e8ecee" stroke-width="1.300"/><path d="M17 5.500h3v3h-3z" fill="#e8ecee"/></svg></div>
        <div class="app run"><svg width="28" height="24" viewBox="0 0 28 24"><path d="M0 1h11l2 3H0z" fill="#e2a01a"/><path d="M0 4h28v18H0z" fill="#fbd15b"/><path d="M6 13q0-1 1-1h14q1 0 1 1v10h-4v-5h-8v5H6z" fill="#3a93d8"/></svg></div>
        <div class="app run"><svg width="28" height="28" viewBox="0 0 28 28"><circle cx="14" cy="14" r="13.500" fill="#fbc116"/><path d="M14 14L2.300 7.200A13.500 13.500 0 0 1 25.700 7.200z" fill="#e33b2e"/><path d="M14 7h11.600L20 17.500z" fill="#fbc116"/><path d="M2.300 7.200A13.500 13.500 0 0 0 13 27.500L19.500 17 8.500 17z" fill="#2aa14c"/><circle cx="14" cy="14" r="6.600" fill="#fff"/><circle cx="14" cy="14" r="5" fill="#4286f5"/></svg></div>
        <div class="app"><svg width="30" height="30" viewBox="0 0 30 30"><path d="M1 14A14 14 0 0 1 29 13q1 7-6 8-6 0-5-4 1-6-6-7-7 0-11 4z" fill="url(#gEdge)"/><path d="M1 14q2-6 9-6 7 1 7 6-6 1-4 7 4 8 13 3-5 6-13 5A14 14 0 0 1 1 14z" fill="#1173cf"/><path d="M11 15q-5 8 4 14 6 0 11-5-9 4-13-3-1-3 1-6z" fill="#0c4e9e"/></svg></div>
        <div class="app run current"><svg width="28" height="26" viewBox="0 0 28 26"><path d="M4 1h20v23H1z" fill="url(#gAcc)" stroke="#e3b0c4"/><path d="M15 12L4 23.500" stroke="#fff" stroke-width="3.500"/><path d="M6 19l4 3" stroke="#fff" stroke-width="2"/><circle cx="19" cy="8.500" r="7.500" fill="#fff"/><circle cx="21.500" cy="6" r="2" fill="#a33a65"/></svg></div>
        <div class="tray">
            <svg width="17" height="9" viewBox="0 0 17 9"><path d="M.5 8.500l8-8 8 8" fill="none" stroke="#fff" stroke-width="1.400"/></svg>
            <svg class="bat" width="20" height="12" viewBox="0 0 20 12"><path d="M.7 .7h16.600v10H.7zM18.500 3.500v4.500" fill="none" stroke="#fff" stroke-width="1.300"/><path d="M2.500 2.500h8v7h-8z" fill="#fff"/></svg>
            <svg class="wifi" width="18" height="16" viewBox="0 0 18 16"><path d="M1 13Q2 2 15 1" fill="none" stroke="#7d8a9a" stroke-width="1.300"/><path d="M4.500 14Q5 6 15 5M8 15q.5-5.500 7-6M11 15.500q.5-3 4-3" fill="none" stroke="#e6e9ee" stroke-width="1.300"/><circle cx="14.500" cy="14.500" r="1.300" fill="#fff"/></svg>
            <svg class="vol" width="22" height="18" viewBox="0 0 22 18"><path d="M1 6h3l4-4v14l-4-4H1zM11 6.500q2 2.500 0 5M14 4q4 5 0 10M17 1.500q5 7.500 0 15" fill="none" stroke="#fff" stroke-width="1.200"/></svg>
            <span class="ime">가</span>
            <div class="clock">오후 4:16<br>2020-12-01</div>
            <div class="notify"><svg width="20" height="20" viewBox="0 0 20 20"><path d="M0 0h20v16H9l-4 4v-4H0z" fill="#fff"/><path d="M4 4.500h12M4 8h12M4 11.500h8" stroke="#1b2a41"/></svg><span class="badge">4</span></div>
            <i class="peek"></i>
        </div>
    </div>
</div>

<script>
    const STEP = 47.24;

    function addMark(parent, cls, prop, pos, text) {
        const el = document.createElement('i');
        el.className = cls;
        el.style[prop] = pos.toFixed(1) + 'px';
        if (text) el.textContent = text;
        parent.appendChild(el);
    }

    // quarter ticks between the centimetre numbers
    function drawRuler(parent, prop, start, length) {
        for (let k = 1; start + k * STEP / 4 < length; k++) {
            const pos = start + k * STEP / 4;
            if (k % 4 === 0) addMark(parent, 'num', prop, prop === 'top' ? pos - 5 : pos - 4, String(k / 4));
            else addMark(parent, k % 2 ? 'tick' : 'tick mid', prop, pos, '');
        }
    }

    drawRuler(document.getElementById('hruler'), 'left', -1.5, 1656);
    document.querySelectorAll('.vpart').forEach(p => drawRuler(p, 'top', -1.5, Number(p.dataset.len)));
</script>

</body>
</html>
```
FILE: styles.css
```css
* {
    box-sizing: border-box;
}
body {
    margin: 0;
    overflow: hidden;
    font-family: "Noto Sans CJK KR", "Noto Sans", sans-serif;
    font-size: 15px;
    font-weight: 300;
    letter-spacing: 1.1px;
    color: #000;
}
svg {
    display: block;
    flex: none;
}
ul {
    margin: 0;
    padding: 0;
    list-style: none;
}
.defs {
    position: absolute;
}
.window {
    position: relative;
    width: 1920px;
    height: 1080px;
    display: flex;
    flex-direction: column;
    background: #bfdbff;
    white-space: nowrap;
}

/* title bar */
.titlebar {
    height: 30px;
    display: flex;
    background: #fff;
}
.qat {
    width: 392px;
    margin-left: 48px;
}
.context-title {
    width: 133px;
    height: 29px;
    padding-left: 6px;
    line-height: 26px;
    background: linear-gradient(#fff, #f7eff6 60%, #e3c8e2);
    border-bottom: 1px solid #b78acb;
    border-left: 1px solid #e8e0ec;
    border-right: 1px solid #d8cfe0;
}
.window-title {
    width: 1000px;
    padding-left: 186px;
    line-height: 30px;
    letter-spacing: 0.42px;
}
.window-buttons {
    margin-left: 187px;
}
.orb {
    position: absolute;
    left: 4px;
    top: 0;
}

/* ribbon tabs */
.tabs {
    height: 30px;
    display: flex;
    color: #15428b;
    line-height: 28px;
}
.tab {
    text-align: center;
}
.t-home {
    margin-left: 57px;
    width: 42px;
}
.t-create {
    width: 76px;
}
.t-ext {
    width: 107px;
}
.t-db {
    width: 158px;
    padding-right: 3px;
}
.t-design {
    width: 76px;
    padding-right: 4px;
    border-left: 1px solid #b3c9ea;
}
.tab.active {
    width: 54px;
    height: 30px;
    margin-top: 1px;
    background: linear-gradient(#dcd0e6, #d6cce4 40%, #ebe4f1);
    border: 1px solid #b5a7c9;
    border-bottom: 0;
    border-radius: 4px 4px 0 0;
    line-height: 25px;
}
.help {
    margin: 6px 0 0 1329px;
}

/* ribbon */
.ribbon {
    height: 123px;
    padding: 1px 0 0 2px;
    display: flex;
    gap: 4px;
    margin: 0 1px 0 2px;
    background: linear-gradient(#e9def0, #f5f2f9 6px, #f6f4f9 40px, #fafafa 70px, #fff 110px);
    border: 1px solid #b9bdc9;
    border-bottom: 3px solid #8c9fbf;
    border-radius: 4px;
}
.group {
    height: 116px;
    display: flex;
    flex-direction: column;
    border: 1px solid #c6c6cc;
    border-radius: 3px;
    overflow: hidden;
    flex: none;
}
.g1 { width: 68px; }
.g2 { width: 429px; }
.g3 { width: 192px; }
.g4 { width: 367px; }
.g5 { width: 393px; }
.g6 { width: 258px; }
.group-body {
    height: 92px;
    display: flex;
    color: #8d8d8d;
}
.group-title {
    height: 22px;
    line-height: 21px;
    text-align: center;
    color: #3e6aaa;
    background: linear-gradient(#dde7f4, #d0def0);
}
.big {
    width: 66px;
    padding-top: 8px;
    display: flex;
    flex-direction: column;
    align-items: center;
    text-align: center;
    line-height: 20px;
    flex: none;
}
.big span {
    margin-top: 6px;
}
.big.on {
    color: #15428b;
}
.big.w50 { width: 50px; }
.big.w54 { width: 54px; }
.big.w66 { width: 66px; }
.big.w75 { width: 75px; }
.big.w76 { width: 76px; }
.g2 .big:first-child {
    margin-left: 2px;
}
.dd {
    display: inline-block;
    margin: 0 0 3px 6px;
    border: 3px solid transparent;
    border-top-color: #a0a0a0;
    border-bottom: 0;
}
.on .dd {
    border-top-color: #3d6db5;
}
.ga {
    font-size: 12px;
    font-weight: 500;
    text-anchor: middle;
    fill: #5b7199;
    letter-spacing: 0;
}
.sep {
    width: 1px;
    height: 55px;
    margin: 18px 0 0 5px;
    background: #a9c1e2;
}
.sep.s2 {
    margin-left: 7px;
}
.ic {
    width: 16px;
    height: 16px;
}
.pair-rows {
    padding: 14px 0 0 8px;
    display: flex;
    flex-direction: column;
    gap: 13px;
    color: #15428b;
}
.g6 .pair-rows {
    padding-left: 2px;
}
.pair {
    display: flex;
    align-items: center;
}
.pair > .ic {
    margin-right: 5px;
}
.btn {
    height: 26px;
    padding-left: 4px;
    display: flex;
    align-items: center;
    gap: 6px;
    line-height: 22px;
    border: 1px solid transparent;
}
.btn.lit {
    background: linear-gradient(#fad6ab, #fbc179 45%, #fcb04b 50%, #ffdd72 90%, #fbe7a8);
    border-color: #a9895d;
    border-radius: 2px;
}
.btn.w60 { width: 60px; }
.btn.w75 { width: 75px; }
.btn.w110 { width: 110px; }
.btn.w146 { width: 146px; }
.w118 {
    width: 118px;
    padding-left: 8px;
}
.w145 {
    width: 147px;
    padding-left: 2px;
}
.w138 {
    width: 138px;
    padding-left: 8px;
}
.small {
    height: 26px;
    display: flex;
    align-items: center;
    gap: 6px;
}

/* main area */
.main {
    height: 820px;
    display: flex;
    background: #bfdbff;
}
.nav {
    width: 209px;
    height: 820px;
    padding-top: 1px;
    background: #fff;
    border-left: 4px solid #88aad8;
    border-right: 1px solid #6593cf;
    border-bottom: 1px solid #6593cf;
}
.nav-head {
    height: 29px;
    display: flex;
    justify-content: space-between;
    padding: 0 6px 0 6px;
    line-height: 31px;
    font-size: 16px;
    letter-spacing: 1.05px;
    color: #2d5795;
    background: linear-gradient(#e3efff, #c4ddff 50%, #b3d2fd);
    border-bottom: 1px solid #6593cf;
}
.nav-search {
    height: 33px;
    padding: 2px 6px 0 2px;
    display: flex;
    justify-content: space-between;
    background: linear-gradient(#d6e6fb, #bcd8fe);
}
.nav-search svg {
    margin-top: 6px;
}
.search-box {
    width: 180px;
    height: 28px;
    padding-left: 3px;
    line-height: 22px;
    font-style: italic;
    letter-spacing: 0;
    background: #fff;
    border: 1px solid #7f9db9;
}
.nav-section {
    height: 23px;
    padding: 0 15px 0 9px;
    display: flex;
    justify-content: space-between;
    align-items: center;
    font-weight: 500;
    letter-spacing: 0.5px;
    line-height: 20px;
    color: #15428b;
    background: linear-gradient(90deg, #cfe2fc, #e2eeff 60%, #d3e6fe);
    border-top: 1px solid #6593cf;
    border-bottom: 1px solid #afd2ff;
}
.nav li {
    height: 30px;
    padding: 0 0 5px 12px;
    display: flex;
    align-items: center;
}
.nav li svg {
    width: 20px;
    margin-right: 14px;
    margin-top: -1px;
}
.nav li.selected {
    background: #dedede;
}

/* document */
.doc {
    width: 1711px;
    display: flex;
    flex-direction: column;
    flex: none;
}
.doc-tabs {
    height: 30px;
    display: flex;
    justify-content: space-between;
    padding: 1px 9px 0 6px;
    background: #88aad8;
    border-bottom: 1px solid #6593cf;
    box-shadow: inset 5px 0 #bfdbff;
}
.doc-tab {
    position: relative;
    width: 150px;
    display: flex;
    padding-left: 8px;
}
.doc-tab-bg {
    position: absolute;
    left: 0;
    top: 0;
}
.doc-icon {
    position: relative;
    margin: 5px 10px 0 0;
}
.doc-tab b {
    position: relative;
    line-height: 26px;
    font-weight: 500;
}
.doc-close {
    margin-top: 7px;
}
.doc-body {
    height: 790px;
    display: flex;
    border-top: 1px solid #fff;
    border-left: 1px solid #6593cf;
    margin-left: 5px;
    border-bottom: 1px solid #6593cf;
}
.design {
    width: 1684px;
    display: flex;
    flex-direction: column;
}
.ruler-row {
    height: 27px;
    padding: 2px 0 0 3px;
    display: flex;
    gap: 4px;
}
.selector {
    width: 21px;
    height: 22px;
    padding: 4px;
    background: #e3efff;
    border: 1px solid #6593cf;
}
.selector i {
    display: block;
    width: 11px;
    height: 12px;
    background: #000;
}
.hruler {
    position: relative;
    flex: 1;
    height: 23px;
    overflow: hidden;
    background: #fff;
    border: 1px solid #6593cf;
    border-width: 1px 0 1px 1px;
    box-shadow: inset 0 -2px #cfe2fb;
}
.num, .tick {
    position: absolute;
    font-style: normal;
}
.num {
    font: 300 16px/19px Roboto, sans-serif;
    letter-spacing: -1px;
    padding-right: 1px;
}
.hruler .num {
    top: 1px;
}
.hruler .tick {
    top: 6px;
    width: 1px;
    height: 4px;
    background: #000;
}
.hruler .mid {
    top: 5px;
    height: 7px;
}
.canvas {
    height: 742px;
    display: flex;
    padding-left: 3px;
    overflow: hidden;
}
.vruler {
    width: 21px;
    height: 742px;
    display: flex;
    flex-direction: column;
    margin-right: 3px;
    background: #fff;
    border: 1px solid #6593cf;
    border-bottom: 0;
}
.vband {
    height: 23px;
    margin: 2px 1px 0 0;
    background: #c1dbff;
    border-right: 1px solid #6593cf;
    border-bottom: 1px solid #6593cf;
    flex: none;
}
.vpart {
    position: relative;
    height: 46px;
    overflow: hidden;
    flex: none;
}
.vpart.grow {
    height: 573px;
}
.vpart .tick {
    left: 6px;
    width: 3px;
    height: 1px;
    background: #000;
}
.vpart .mid {
    left: 5px;
    width: 7px;
}
.vpart .num {
    left: 4px;
}
.sections {
    width: 1658px;
    height: 742px;
    padding-top: 1px;
    background: #a3c1ea;
    border-left: 2px solid #6593cf;
    border-top: 1px solid #6593cf;
}
.band {
    height: 25px;
    padding-left: 4px;
    display: flex;
    align-items: flex-start;
    line-height: 23px;
    letter-spacing: 0.8px;
    gap: 4px;
    background: #c1dbff;
    border-top: 1px solid #c1dbff;
    border-bottom: 1px solid #000;
    box-shadow: inset 0 -1px #6593cf, inset 1px 1px #fff;
}
.band svg {
    margin-top: 3px;
}
.sheet {
    width: 989px;
    height: 46px;
    display: flex;
    padding: 9px 0 0 13px;
    background: #fff;
    border-right: 1px solid #000;
    font-size: 18px;
    font-weight: 350;
    letter-spacing: 1px;
}
.sheet.detail {
    padding-top: 4px;
}
.sheet.foot {
    height: 71px;
    padding: 13px 0 0 349px;
    border-bottom: 1px solid #000;
}
.field {
    height: 30px;
    padding: 0 2px;
    line-height: 27px;
    overflow: hidden;
    background: #fff;
    border: 1px solid #7f7f7f;
    flex: none;
}
.detail .field {
    height: 31px;
    color: #333;
    border-color: #a5a5a5;
}
.detail .tall {
    height: 34px;
}
.field.c {
    text-align: center;
}
.field.w82 { width: 82px; margin-right: 8px; }
.field.w129 { width: 129px; margin-right: 8px; }
.field.w77 { width: 77px; margin-right: 9px; }
.field.w206 { width: 206px; margin-right: 8px; }
.field.w132 { width: 132px; margin-right: 9px; }
.field.w132b { width: 132px; margin-right: 7px; }
.field.w134 { width: 134px; }
.detail .combo {
    padding-right: 0;
    display: flex;
    justify-content: space-between;
    color: #111;
}
.combo em {
    width: 21px;
    height: 29px;
    display: flex;
    align-items: center;
    justify-content: center;
    background: #e1e1e1;
    border: 1px solid #adadad;
}
.foot .field {
    color: #333;
    border-color: #a5a5a5;
}
.foot .lbl {
    color: #000;
    border-color: #7f7f7f;
}
.field.f1 { width: 74px; margin-right: 16px; letter-spacing: 0.9px; }
.field.f2 { width: 134px; margin-right: 69px; letter-spacing: 0.5px; }
.field.f3 { width: 121px; margin-right: 16px; letter-spacing: 0.9px; }
.field.f4 { width: 134px; letter-spacing: 0; }

/* scroll bars */
.hscroll {
    height: 20px;
    padding: 0 5px 0 3px;
    display: flex;
    align-items: center;
    background: #f0f0f0;
}
.hthumb, .vthumb {
    display: flex;
    align-items: center;
    justify-content: center;
    gap: 1px;
    border: 1px solid #687b9e;
    border-radius: 2px;
}
.hthumb {
    width: 1092px;
    height: 18px;
    margin: 0 auto 0 6px;
    background: linear-gradient(#f5f8fa, #dde4eb 45%, #c2ccd8 50%, #b9c5d6);
}
.hthumb i {
    width: 1px;
    height: 7px;
    background: #6d7a92;
}
.vscroll {
    width: 21px;
    height: 788px;
    padding-top: 6px;
    display: flex;
    flex-direction: column;
    align-items: center;
    background: #f0f0f0;
}
.vthumb {
    width: 18px;
    height: 482px;
    margin-top: 6px;
    flex-direction: column;
    background: linear-gradient(90deg, #f5f8fa, #dde4eb 45%, #c2ccd8 50%, #b9c5d6);
}
.vthumb i {
    width: 7px;
    height: 1px;
    background: #6d7a92;
}
.vscroll .down {
    margin-top: 251px;
}

/* status bar */
.status {
    height: 27px;
    padding-left: 8px;
    display: flex;
    line-height: 24px;
    color: #15296b;
    background: linear-gradient(#dce9fb, #cbdff9 35%, #b0cff5 40%, #d6e6fb);
    border-top: 1px solid #fff;
}
.mode {
    width: 951px;
    letter-spacing: 0.9px;
}
.status-div {
    width: 1px;
    height: 22px;
    margin-top: 1px;
    background: #8fb3e0;
}
.numlock {
    width: 80px;
    margin-left: 805px;
    letter-spacing: 0.1px;
    border-right: 1px solid #7f9fcc;
}
.views {
    display: flex;
    margin: 1px 0 0 5px;
    height: 23px;
    border: 1px solid #6f95c9;
}
.views span {
    width: 23px;
    display: flex;
    align-items: center;
    justify-content: center;
    background: linear-gradient(#eef5fe, #c5dbf8);
    border-right: 1px solid #a8c4ea;
}
.views .cur {
    background: linear-gradient(#f9d48b, #f4b23c 50%, #fde08a);
}

/* taskbar */
.taskbar {
    height: 50px;
    display: flex;
    background: linear-gradient(90deg, #20353e, #20353e 50%, #1b2d3b 75%, #1b2a41 82%);
    color: #fff;
    letter-spacing: 0;
}
.start {
    width: 60px;
    padding: 15px 0 0 20px;
}
.task-search {
    width: 430px;
    padding: 0 0 3px 14px;
    display: flex;
    align-items: center;
    gap: 13px;
    font-size: 19px;
    font-weight: 350;
    letter-spacing: 1.45px;
    color: #222;
    background: #f1f1f1;
    border: 1px solid #c4c4c4;
}
.app {
    width: 52px;
    margin-right: 10px;
    display: flex;
    align-items: center;
    justify-content: center;
    padding-bottom: 1px;
    border-bottom: 3px solid transparent;
}
.taskview {
    margin: 0 8px 0 1px;
    width: 59px;
}
.run {
    border-bottom-color: #76b9ed;
}
.current {
    width: 61px;
    margin: 0 0 0 -4px;
    background: #4d5d64;
}
.tray {
    flex: 1;
    display: flex;
    align-items: center;
    justify-content: flex-end;
}
.bat { margin-left: 12px; }
.wifi { margin-left: 14px; }
.vol { margin-left: 8px; }
.ime {
    margin: 0 11px 0 10px;
    font-size: 19px;
    font-weight: 350;
    line-height: 46px;
}
.clock {
    width: 76px;
    padding-bottom: 2px;
    text-align: center;
    font-size: 15px;
    font-weight: 350;
    line-height: 23px;
    letter-spacing: -0.1px;
}
.notify {
    position: relative;
    margin-left: 24px;
    padding-bottom: 6px;
}
.badge {
    position: absolute;
    left: 9px;
    top: 8px;
    width: 20px;
    height: 20px;
    border: 1px solid #999;
    border-radius: 50%;
    background: #2d3440;
    text-align: center;
    font-size: 14px;
    font-weight: 700;
    line-height: 17px;
}
.peek {
    width: 1px;
    height: 50px;
    margin: 0 5px 0 25px;
    background: #5a6474;
}
```
